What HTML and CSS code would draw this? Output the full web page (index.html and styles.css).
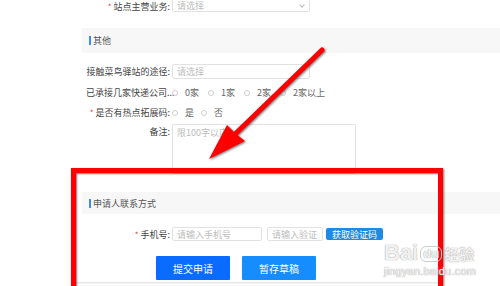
FILE: index.html
```html
<!DOCTYPE html>
<html lang="zh">
<head>
<meta charset="utf-8">
<link rel="stylesheet" href="styles.css">
</head>
<body>
<div class="page">
  <div class="row r1">
    <div class="lbl"><span class="star">*</span>站点主营业务:</div>
    <div class="field select w138"><span class="ph">请选择</span><span class="chev"></span></div>
  </div>

  <div class="band b1"><span class="bar"></span>其他</div>

  <div class="row r2">
    <div class="lbl">接触菜鸟驿站的途径:</div>
    <div class="field input w138"><span class="ph">请选择</span></div>
  </div>

  <div class="row r3">
    <div class="lbl">已承接几家快递公司...</div>
    <div class="radios">
      <span class="radio"><i></i>0家</span>
      <span class="radio"><i></i>1家</span>
      <span class="radio"><i></i>2家</span>
      <span class="radio"><i></i>2家以上</span>
    </div>
  </div>

  <div class="row r4">
    <div class="lbl"><span class="star">*</span>是否有热点拓展码:</div>
    <div class="radios tight">
      <span class="radio"><i></i>是</span>
      <span class="radio"><i></i>否</span>
    </div>
  </div>

  <div class="row r5">
    <div class="lbl top">备注:</div>
    <div class="field textarea"><span class="ph">限100字以内</span></div>
  </div>

  <div class="band b2"><span class="bar"></span>申请人联系方式</div>

  <div class="row r6">
    <div class="lbl"><span class="star">*</span>手机号:</div>
    <div class="field input w90"><span class="ph">请输入手机号</span></div>
    <div class="field input w56"><span class="ph">请输入验证</span></div>
    <div class="codebtn">获取验证码</div>
  </div>

  <div class="actions">
    <div class="btn primary">提交申请</div>
    <div class="btn secondary">暂存草稿</div>
  </div>

  <div class="footline"></div>
</div>

<div class="redbox"></div>

<svg class="arrow" width="500" height="286" viewBox="0 0 500 286">
  <g class="arrowg">
    <line x1="322" y1="50" x2="230" y2="139" stroke="#ff0000" stroke-width="5" stroke-linecap="round"/>
    <polygon points="209,159 227,125 236,134 245,141" fill="#ff0000"/>
  </g>
</svg>

<div class="watermark">
  <div class="wm1"><span class="bai">Bai</span><span class="du">du</span><span class="jy">经验</span></div>
  <div class="wm2">jingyan.baidu.com</div>
</div>
</body>
</html>
```

FILE: styles.css
```css
* { box-sizing: border-box; }
html, body { margin: 0; padding: 0; }
body {
  width: 500px;
  height: 286px;
  overflow: hidden;
  position: relative;
  background: #ffffff;
  font-family: "Noto Sans CJK SC", "Noto Sans", sans-serif;
  font-size: 9px;
  color: #444;
}
.page {
  display: flex;
  flex-direction: column;
}
.row {
  display: flex;
  align-items: center;
  height: 15px;
}
.lbl {
  width: 170px;
  padding-left: 86px;
  text-align: right;
  white-space: nowrap;
  line-height: 11px;
  color: #444;
  margin-right: 2px;
  flex-shrink: 0;
}
.lbl.top { align-self: flex-start; padding-top: 2px; }
.star { color: #e8383d; margin-right: 2px; font-size: 8px; }
.field {
  border: 1px solid #e2e2e2;
  border-radius: 2px;
  height: 15px;
  display: flex;
  align-items: center;
  padding-left: 4px;
  background: #fff;
}
.ph { color: #bcbcbc; line-height: 11px; white-space: nowrap; }
.w138 { width: 138px; }
.w90 { width: 90px; }
.w56 { width: 56px; margin-left: 5px; }
.select { position: relative; }
.chev {
  position: absolute;
  right: 5px;
  top: 3px;
  width: 4px;
  height: 4px;
  border-right: 1px solid #bbb;
  border-bottom: 1px solid #bbb;
  transform: rotate(45deg);
}
.r1 { margin-top: 0; height: 12px; }
.r1 .lbl { line-height: 10px; padding-top: 1px; }
.r1 .field { height: 12px; border-top: none; border-radius: 0 0 2px 2px; padding-top: 1px; }
.r1 .ph { line-height: 10px; }
.band {
  margin-left: 82px;
  height: 25px;
  background: #f7f7f7;
  display: flex;
  align-items: center;
  padding-left: 7px;
  color: #555;
  line-height: 11px;
}
.bar {
  width: 2px;
  height: 9px;
  background: #3d8bf5;
  margin-right: 2px;
}
.b1 { margin-top: 16px; }
.r2 { margin-top: 11px; }
.r3 { margin-top: 6px; }
.r4 { margin-top: 5px; }
.radios { display: flex; align-items: center; }
.radio {
  display: flex;
  align-items: center;
  color: #666;
  margin-right: 9px;
  line-height: 11px;
}
.radios.tight .radio { margin-right: 7px; }
.radio i {
  width: 6px;
  height: 6px;
  border: 1px solid #cfcfcf;
  border-radius: 50%;
  margin-right: 7px;
}
.r5 { margin-top: 4px; height: 50px; align-items: flex-start; }
.textarea {
  width: 184px;
  height: 50px;
  align-items: flex-start;
  padding-top: 2px;
}
.b2 { margin-top: 18px; height: 22px; }
.r6 { margin-top: 13px; height: 14px; }
.r6 .field { height: 14px; }
.codebtn {
  margin-left: 3px;
  width: 57px;
  height: 12px;
  background: #1c8be6;
  color: #fff;
  border-radius: 2px;
  display: flex;
  align-items: center;
  justify-content: center;
  line-height: 11px;
}
.actions {
  margin-top: 15px;
  margin-left: 156px;
  display: flex;
  gap: 12px;
}
.btn {
  width: 74px;
  height: 24px;
  color: #fff;
  display: flex;
  align-items: center;
  justify-content: center;
  font-size: 10px;
  border-radius: 1px;
}
.primary { background: #0a6cff; }
.secondary { background: #168dff; }
.footline {
  margin-top: 2px;
  margin-left: 76px;
  width: 362px;
  height: 2px;
  background: linear-gradient(#e4e4e4, #f6f6f6);
}
.redbox {
  position: absolute;
  left: 71px;
  top: 168px;
  width: 372px;
  height: 118px;
  border: 5px solid #ff0000;
  border-bottom: none;
  box-shadow: 1px 1px 2px rgba(0,0,0,0.55), inset 1px 1px 2px rgba(0,0,0,0.55);
}
.arrow {
  position: absolute;
  left: 0;
  top: 0;
}
.arrowg { filter: drop-shadow(1px 1px 1px rgba(0,0,0,0.55)); }
.watermark {
  position: absolute;
  left: 384px;
  top: 238px;
  color: rgba(255,255,255,0.85);
  text-shadow: 0 0 1px #aaa, 0 0 1px #aaa;
  font-family: "Liberation Sans", Arial, sans-serif;
}
.wm1 { display: flex; align-items: flex-end; height: 26px; }
.bai { font-size: 22px; font-weight: bold; line-height: 22px; }
.du {
  font-size: 13px;
  font-weight: bold;
  line-height: 14px;
  border: 1px solid #ccc;
  border-radius: 6px;
  padding: 0 2px;
  margin: 0 2px 2px 2px;
}
.jy { font-family: "Noto Sans CJK SC", sans-serif; font-size: 15px; line-height: 20px; font-weight: bold; }
.wm2 { font-size: 11px; line-height: 12px; margin-top: 1px; letter-spacing: 0.2px; }
```
